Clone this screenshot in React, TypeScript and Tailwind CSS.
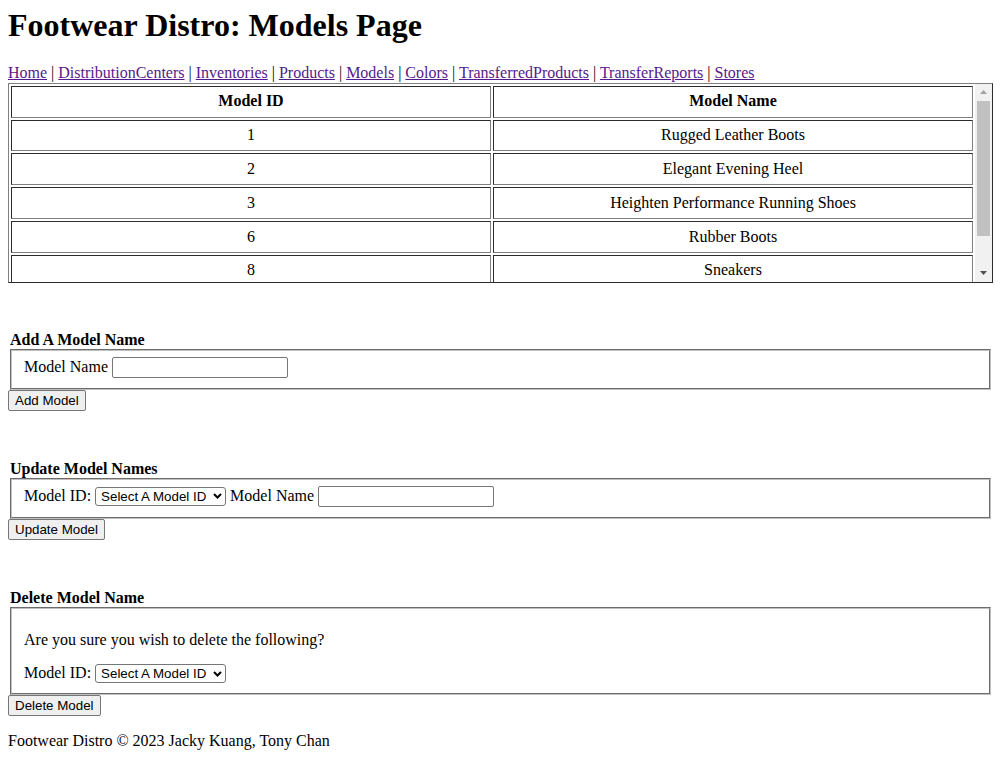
import { Fragment } from "react";

const links = [
  "Home",
  "DistributionCenters",
  "Inventories",
  "Products",
  "Models",
  "Colors",
  "TransferredProducts",
  "TransferReports",
  "Stores",
];

const rows: [number, string][] = [
  [1, "Rugged Leather Boots"],
  [2, "Elegant Evening Heel"],
  [3, "Heighten Performance Running Shoes"],
  [6, "Rubber Boots"],
  [8, "Sneakers"],
];

function Btn({ children }: { children: React.ReactNode }) {
  return (
    <button className="block h-[21px] px-[6px] border border-[#767676] rounded-[2px] bg-[#efefef] text-[13.33px] leading-[15px] font-['Liberation_Sans',Arial,sans-serif] text-black">
      {children}
    </button>
  );
}

function TextInput() {
  return (
    <input
      type="text"
      className="w-[176px] h-[21px] border border-[#767676] rounded-[2px] bg-white px-[2px] text-[13.33px] font-['Liberation_Sans',Arial,sans-serif]"
    />
  );
}

function FakeSelect() {
  return (
    <span className="inline-flex items-center justify-between w-[131px] h-[19px] border border-[#767676] rounded-[3px] bg-white pl-[5px] pr-[3px] text-[13.33px] leading-[15px] font-['Liberation_Sans',Arial,sans-serif] text-black">
      <span>Select A Model ID</span>
      <svg width="9" height="6" viewBox="0 0 9 6">
        <path d="M1 1 L4.5 4.5 L8 1" stroke="#000" strokeWidth="2" fill="none" />
      </svg>
    </span>
  );
}

function Fieldset({ children }: { children: React.ReactNode }) {
  return (
    <div className="mx-[2px] border-2 border-[#c0c0c0] [border-style:groove] pt-[5.6px] px-[12px] pb-[10px]">
      {children}
    </div>
  );
}

export default function App() {
  return (
    <div className="min-h-[765px] bg-white px-[8px] pt-[7px] pb-[16px] text-[16px] leading-[18.4px] text-black font-['Liberation_Serif','Times_New_Roman',serif]">
      <h1 className="text-[32px] font-bold leading-[36px] mb-[21.4px]">
        Footwear Distro: Models Page
      </h1>

      <nav>
        {links.map((l, i) => (
          <Fragment key={l}>
            {i > 0 && " | "}
            <a href="#" className="text-[#551a8b] underline">
              {l}
            </a>
          </Fragment>
        ))}
      </nav>

      <div className="flex h-[200px] border border-[gray] [border-style:outset] overflow-hidden">
        <div className="flex-1 overflow-hidden">
          <table className="w-full border-separate border-spacing-[2px] table-fixed">
            <thead>
              <tr>
                <th className="border border-[gray] [border-style:inset] py-[5.7px] px-[1px] font-bold text-center">
                  Model ID
                </th>
                <th className="border border-[gray] [border-style:inset] py-[5.7px] px-[1px] font-bold text-center">
                  Model Name
                </th>
              </tr>
            </thead>
            <tbody>
              {rows.map(([id, name]) => (
                <tr key={id}>
                  <td className="border border-[gray] [border-style:inset] py-[5.7px] px-[1px] text-center">
                    {id}
                  </td>
                  <td className="border border-[gray] [border-style:inset] py-[5.7px] px-[1px] text-center">
                    {name}
                  </td>
                </tr>
              ))}
            </tbody>
          </table>
        </div>
        <div className="w-[17px] flex flex-col bg-[#f1f1f1]">
          <div className="h-[17px] flex items-center justify-center">
            <svg width="7" height="4" viewBox="0 0 7 4">
              <path d="M0 4 L3.5 0 L7 4 Z" fill="#a3a3a3" />
            </svg>
          </div>
          <div className="h-[135px] mx-[2px] bg-[#c1c1c1]" />
          <div className="flex-1" />
          <div className="h-[17px] flex items-center justify-center">
            <svg width="7" height="4" viewBox="0 0 7 4">
              <path d="M0 0 L7 0 L3.5 4 Z" fill="#505050" />
            </svg>
          </div>
        </div>
      </div>

      <section className="mt-[48px]">
        <div className="pl-[2px] font-bold">Add A Model Name</div>
        <Fieldset>
          <div className="flex items-baseline gap-[4px]">
            <span>Model Name</span>
            <TextInput />
          </div>
        </Fieldset>
        <Btn>Add Model</Btn>
      </section>

      <section className="mt-[49px]">
        <div className="pl-[2px] font-bold">Update Model Names</div>
        <Fieldset>
          <div className="flex items-baseline gap-[4px]">
            <span>Model ID:</span>
            <FakeSelect />
            <span>Model Name</span>
            <TextInput />
          </div>
        </Fieldset>
        <Btn>Update Model</Btn>
      </section>

      <section className="mt-[49px]">
        <div className="pl-[2px] font-bold">Delete Model Name</div>
        <Fieldset>
          <p className="mt-[16px] mb-[15px]">Are you sure you wish to delete the following?</p>
          <div className="flex items-baseline gap-[4px]">
            <span>Model ID:</span>
            <FakeSelect />
          </div>
        </Fieldset>
        <Btn>Delete Model</Btn>
      </section>

      <p className="mt-[16px]">Footwear Distro © 2023 Jacky Kuang, Tony Chan</p>
    </div>
  );
}
